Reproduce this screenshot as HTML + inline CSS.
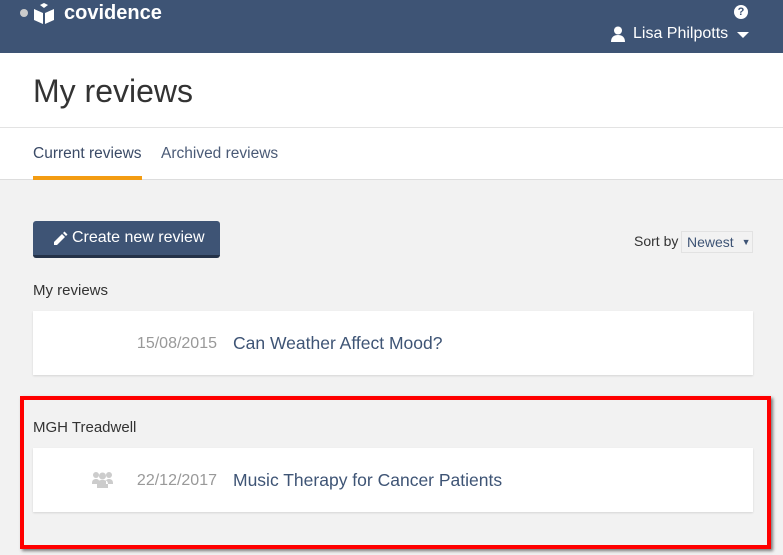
<!DOCTYPE html>
<html><head><meta charset="utf-8"><style>
*{margin:0;padding:0;box-sizing:border-box}
body{width:783px;height:555px;overflow:hidden;background:#f2f2f2;font-family:"Liberation Sans",sans-serif;position:relative}
.hdr{position:absolute;left:0;top:0;width:783px;height:53px;background:#3e5475}
.abs{position:absolute}
.white{position:absolute;left:0;top:53px;width:783px;height:127px;background:#fff;border-bottom:1px solid #ddd}
.card{position:absolute;left:33px;width:720px;height:64px;background:#fff;box-shadow:0 1px 2px rgba(0,0,0,.12)}
.date{position:absolute;right:536px;top:24px;font-size:16px;color:#999}
.title{position:absolute;left:200px;top:22px;font-size:17.5px;color:#3e5475}
</style></head><body>
<div class="hdr">
 <div class="abs" style="left:20px;top:9px;width:8px;height:8px;border-radius:50%;background:#ccc"></div>
 <svg class="abs" style="left:33px;top:3px" width="22" height="22" viewBox="0 0 22 22"><path d="M7 2l4-2 4 2-4 3z" fill="#fff"/><path d="M1 6l9 4v11l-9-4z M21 6l-9 4v11l9-4z" fill="#fff"/></svg>
 <div class="abs" style="left:64px;top:2px;font-size:20px;font-weight:bold;color:#fff">covidence</div>
 <div class="abs" style="left:734px;top:5px;width:14px;height:14px;border-radius:50%;background:#fff;color:#3e5475;font-size:11px;font-weight:bold;text-align:center;line-height:14px">?</div>
 <svg class="abs" style="left:611px;top:26px" width="14" height="16" viewBox="0 0 14 16"><circle cx="7" cy="4.5" r="4" fill="#fff"/><path d="M0 16c0-5 3-7 7-7s7 2 7 7z" fill="#fff"/></svg>
 <div class="abs" style="left:633px;top:25px;font-size:16px;color:#fff">Lisa Philpotts</div>
 <div class="abs" style="left:737px;top:32px;width:0;height:0;border-left:6px solid transparent;border-right:6px solid transparent;border-top:6px solid #fff"></div>
</div>
<div class="white">
 <div class="abs" style="left:0;top:74px;width:783px;height:1px;background:#e3e3e3"></div>
 <div class="abs" style="left:33px;top:20px;font-size:32px;color:#333">My reviews</div>
 <div class="abs" style="left:33px;top:92px;font-size:15.5px;color:#3a4a66">Current reviews</div>
 <div class="abs" style="left:161px;top:92px;font-size:15.5px;color:#4a5a76">Archived reviews</div>
 <div class="abs" style="left:33px;top:123px;width:109px;height:4px;background:#f39c12"></div>
</div>
<div class="abs" style="left:33px;top:221px;width:187px;height:37px;background:#3e5475;border-radius:3px;border-bottom:3px solid #243248"></div>
<svg class="abs" style="left:53px;top:231px" width="15" height="15" viewBox="0 0 15 15"><path d="M1 11l8-8 3 3-8 8H1z M10 2l1.5-1.5 3 3L13 5z" fill="#fff"/></svg>
<div class="abs" style="left:72px;top:229px;font-size:16px;color:#fff">Create new review</div>
<div class="abs" style="left:634px;top:233px;font-size:14px;color:#333">Sort by</div>
<div class="abs" style="left:681px;top:231px;width:72px;height:22px;border:1px solid #e2e2e2;font-size:14px;color:#3e5475;padding:2px 0 0 5px">Newest <span style="font-size:9px;position:relative;top:-2px;margin-left:4px">▼</span></div>
<div class="abs" style="left:33px;top:282px;font-size:15px;color:#333">My reviews</div>
<div class="card" style="top:311px"><div class="date">15/08/2015</div><div class="title">Can Weather Affect Mood?</div></div>
<div class="abs" style="left:20px;top:396px;width:751px;height:153px;border:4px solid #f00;box-shadow:2px 2px 3px rgba(0,0,0,.5)"></div>
<div class="abs" style="left:33px;top:419px;font-size:15px;color:#333">MGH Treadwell</div>
<div class="card" style="top:448px"><svg class="abs" style="left:59px;top:23px" width="21" height="17" viewBox="0 0 21 17"><circle cx="4" cy="4" r="3" fill="#ccc"/><circle cx="17" cy="4" r="3" fill="#ccc"/><circle cx="10.5" cy="5" r="3.5" fill="#ccc"/><path d="M0 12c0-3 2-4 4-4s3 1 3 2v3H0z M21 12c0-3-2-4-4-4s-3 1-3 2v3h7z M5 17v-4c0-3 2-4 5.5-4S16 10 16 13v4z" fill="#ccc"/></svg><div class="date">22/12/2017</div><div class="title">Music Therapy for Cancer Patients</div></div>
</body></html>
